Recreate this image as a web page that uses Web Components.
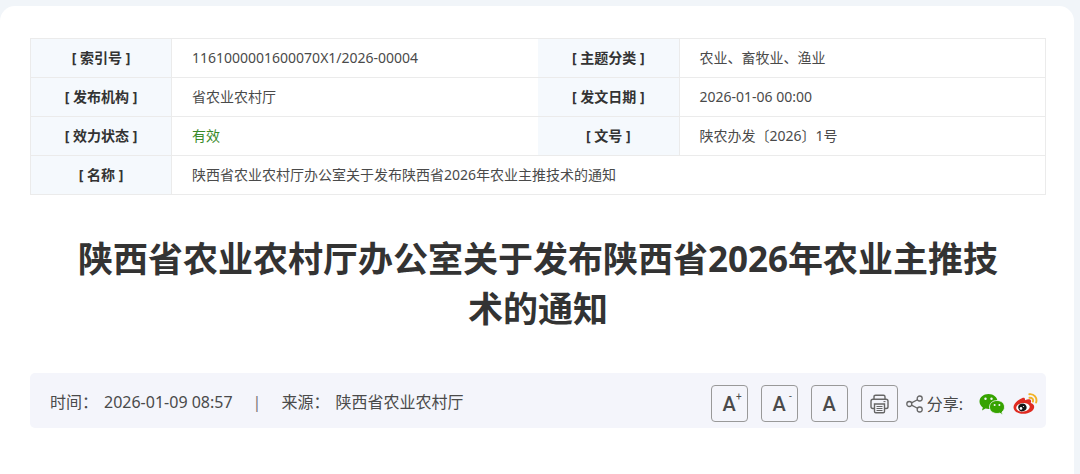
<!DOCTYPE html>
<html lang="zh-CN">
<head>
<meta charset="utf-8">
<meta name="viewport" content="width=device-width, initial-scale=1">
<title>陕西省农业农村厅办公室关于发布陕西省2026年农业主推技术的通知</title>
<style>
body {
  margin: 0;
  background: #f1f5f9;
  color: #333;
  font-family: "Noto Sans", "Noto Sans CJK SC", sans-serif;
}
</style>
</head>
<body>
<article-card>
  <info-table></info-table>
  <article-title>陕西省农业农村厅办公室关于发布陕西省2026年农业主推技术的通知</article-title>
  <meta-bar>
    <meta-item label="时间：">2026-01-09 08:57</meta-item>
    <meta-item label="来源：">陕西省农业农村厅</meta-item>
    <article-tools slot="tools"></article-tools>
  </meta-bar>
</article-card>

<script>
class ArticleCard extends HTMLElement {
  constructor() {
    super();
    this.attachShadow({ mode: "open" });
    this.shadowRoot.innerHTML = `
<style>
:host {
  display: block;
  box-sizing: border-box;
  min-height: calc(100vh - 6px);
  margin: 6px 6px 0 0;
  padding: 32px 28px 40px 30px;
  border-radius: 15px 15px 0 0;
  background: #fff;
}
</style>
<slot></slot>
`;
  }
}

class InfoTable extends HTMLElement {
  constructor() {
    super();
    this.attachShadow({ mode: "open" });
    this.shadowRoot.innerHTML = `
<style>
:host {
  display: block;
}
table {
  width: 100%;
  table-layout: fixed;
  border-collapse: collapse;
  border: 1px solid #ebebeb;
  font-size: 14px;
  line-height: 22px;
}
.label {
  width: 141px;
}
th, td {
  padding: 8px 0;
  border-bottom: 1px solid #ebebeb;
}
th {
  background: #f5f9fd;
  border-right: 1px solid #ebebeb;
  text-align: center;
}
td {
  padding-left: 20px;
  color: #4a4a4a;
}
.valid {
  color: #3a8a2a;
}
</style>
<table>
  <colgroup><col class="label"><col><col class="label"><col></colgroup>
  <tr>
    <th scope="row">[ 索引号 ]</th>
    <td>1161000001600070X1/2026-00004</td>
    <th scope="row">[ 主题分类 ]</th>
    <td>农业、畜牧业、渔业</td>
  </tr>
  <tr>
    <th scope="row">[ 发布机构 ]</th>
    <td>省农业农村厅</td>
    <th scope="row">[ 发文日期 ]</th>
    <td>2026-01-06 00:00</td>
  </tr>
  <tr>
    <th scope="row">[ 效力状态 ]</th>
    <td class="valid">有效</td>
    <th scope="row">[ 文号 ]</th>
    <td>陕农办发〔2026〕1号</td>
  </tr>
  <tr>
    <th scope="row">[ 名称 ]</th>
    <td colspan="3">陕西省农业农村厅办公室关于发布陕西省2026年农业主推技术的通知</td>
  </tr>
</table>
`;
  }
}

class ArticleTitle extends HTMLElement {
  constructor() {
    super();
    this.attachShadow({ mode: "open" });
    this.shadowRoot.innerHTML = `
<style>
:host {
  display: block;
  padding: 39px 40px;
}
h1 {
  margin: 0;
  font-size: 35px;
  line-height: 50px;
  text-align: center;
}
</style>
<h1><slot></slot></h1>
`;
  }
}

class MetaBar extends HTMLElement {
  constructor() {
    super();
    this.attachShadow({ mode: "open" });
    this.shadowRoot.innerHTML = `
<style>
:host {
  display: flex;
  flex-wrap: wrap;
  align-items: center;
  justify-content: space-between;
  padding: 12px 8px 6px 20px;
  border-radius: 5px;
  background: #f4f5fb;
  color: #4a4a4a;
  font-size: 16px;
  line-height: 24px;
}
.items {
  display: flex;
}
</style>
<div class="items"><slot></slot></div>
<slot name="tools"></slot>
`;
  }
}

class MetaItem extends HTMLElement {
  constructor() {
    super();
    this.attachShadow({ mode: "open" });
    this.shadowRoot.innerHTML = `
<style>
:host {
  display: flex;
  padding-bottom: 4px;
}
:host(:not(:first-of-type))::before {
  content: "|";
  margin: 0 20px;
  color: #777;
}
.label {
  margin-right: 6px;
}
</style>
<span class="label"></span><slot></slot>
`;
  }
  connectedCallback() {
    this.shadowRoot.querySelector(".label").textContent = this.getAttribute("label");
  }
}

class ToolButton extends HTMLElement {
  constructor() {
    super();
    this.attachShadow({ mode: "open" });
    this.shadowRoot.innerHTML = `
<style>
:host {
  display: block;
}
button {
  position: relative;
  display: flex;
  align-items: center;
  justify-content: center;
  width: 37px;
  height: 37px;
  padding: 0;
  border: 1px solid #999;
  border-radius: 4px;
  background: transparent;
  color: #4a4a4a;
  font: 500 20px/20px Roboto, sans-serif;
  cursor: pointer;
}
button:hover {
  border-color: #555;
}
/* plus or minus at the upper right of the letter */
.sign {
  position: absolute;
  top: 5px;
  right: 5px;
  font-size: 10px;
  font-weight: 400;
  line-height: 12px;
}
</style>
<button type="button"><slot></slot><span class="sign"></span></button>
`;
  }
  connectedCallback() {
    this.shadowRoot.querySelector(".sign").textContent = this.getAttribute("sign") || "";
    this.shadowRoot.querySelector("button").setAttribute("aria-label", this.getAttribute("label"));
  }
}

class ArticleTools extends HTMLElement {
  constructor() {
    super();
    this.attachShadow({ mode: "open" });
    this.shadowRoot.innerHTML = `
<style>
:host {
  display: flex;
  align-items: center;
}
.buttons {
  display: flex;
  gap: 13px;
}
svg {
  display: block;
}
.share {
  display: flex;
  align-items: center;
  gap: 4px;
  margin: 0 16px 0 8px;
}
.links {
  display: flex;
  gap: 8px;
}
</style>
<div class="buttons">
  <tool-button label="放大字体" sign="+">A</tool-button>
  <tool-button label="缩小字体" sign="-">A</tool-button>
  <tool-button label="默认字体">A</tool-button>
  <tool-button label="打印">
    <svg width="19" height="20" viewBox="0 0 19 20" fill="none" stroke="#666" stroke-width="1.4">
      <path d="M4 5V2.8Q4 1.2 5.6 1.2h7.8Q15 1.2 15 2.8V5"/>
      <path d="M4.5 14.5H2.8Q1 14.5 1 12.7V7.2Q1 5.2 3 5.2h13q2 0 2 2v5.5q0 1.8-1.8 1.8h-1.7"/>
      <path d="M4.5 10h10v7.5q0 1.3-1.3 1.3H5.8q-1.3 0-1.3-1.3z"/>
      <path d="M6.5 12.5h6M6.5 14.5h6M6.5 16.5h6M13.5 7.6h2" stroke-width="1"/>
    </svg>
  </tool-button>
</div>
<div class="share">
  <svg width="17" height="18" viewBox="0 0 17 18" fill="none" stroke="#666" stroke-width="1.3">
    <circle cx="3.3" cy="9" r="2.5"/>
    <circle cx="13.7" cy="3.5" r="2.5"/>
    <circle cx="13.7" cy="14.5" r="2.5"/>
    <path d="M5.5 7.9l6-3.2M5.5 10.1l6 3.2"/>
  </svg>
  <span>分享:</span>
</div>
<div class="links">
  <a href="#wechat" aria-label="微信">
    <svg width="26" height="22" viewBox="0 0 26 22">
      <path fill="#36a300" d="M9.5 1C4.5 1 .5 4.2.5 8.5c0 2.5 1.3 4.5 3.3 5.900L3 17.5l3.5-1.900c1 .3 2 .4 3.3.4 4.700 0 8.700-3.200 8.700-7.500S14.500 1 9.500 1z"/>
      <path fill="#36a300" stroke="#f4f5fb" stroke-width=".8" d="M18 7.500c-4.300 0-7.500 2.800-7.500 6.500s3.200 6.500 7.500 6.500c1 0 1.900-.2 2.700-.4l2.900 1.600-.7-2.600c1.600-1.200 2.600-3 2.600-5.100 0-3.700-3.200-6.500-7.500-6.500z"/>
      <g fill="#f4f5fb">
        <circle cx="6.500" cy="5.800" r="1.200"/><circle cx="12.500" cy="5.800" r="1.200"/>
        <circle cx="15.600" cy="12" r="1"/><circle cx="20.400" cy="12" r="1"/>
      </g>
    </svg>
  </a>
  <a href="#weibo" aria-label="微博">
    <svg width="25" height="22" viewBox="0 0 25 22">
      <path fill="#df2a20" d="M9 5.200c2-.9 3.300-.3 3 2 2.800-1.100 5.200-1.200 5.900.2.4.8.2 1.700-.2 2.500 2 .6 3.500 1.900 3.500 4.100 0 3.600-4.800 6.800-11 6.800C4.500 20.800.5 18 .5 14.200c0-3.300 3.800-7.100 8.500-9z"/>
      <ellipse cx="10" cy="14.300" rx="6.800" ry="4.300" fill="#fff" transform="rotate(-7 10 14.300)"/>
      <ellipse cx="9.400" cy="14.400" rx="4.200" ry="3.800" fill="#161616" transform="rotate(-20 9.400 14.400)"/>
      <circle cx="8" cy="15.400" r="1.300" fill="#fff"/>
      <circle cx="10.500" cy="13.500" r=".6" fill="#fff"/>
      <path fill="none" stroke="#f2b226" stroke-width="1.900" stroke-linecap="round" d="M16.300 1.200c4.800-.6 8.300 3.500 6.800 8.300M16.500 4.800c2.500-.3 4.100 1.500 3.400 3.800"/>
    </svg>
  </a>
</div>
`;
  }
}

window.customElements.define("article-card", ArticleCard);
window.customElements.define("info-table", InfoTable);
window.customElements.define("article-title", ArticleTitle);
window.customElements.define("meta-bar", MetaBar);
window.customElements.define("meta-item", MetaItem);
window.customElements.define("tool-button", ToolButton);
window.customElements.define("article-tools", ArticleTools);
</script>
</body>
</html>
